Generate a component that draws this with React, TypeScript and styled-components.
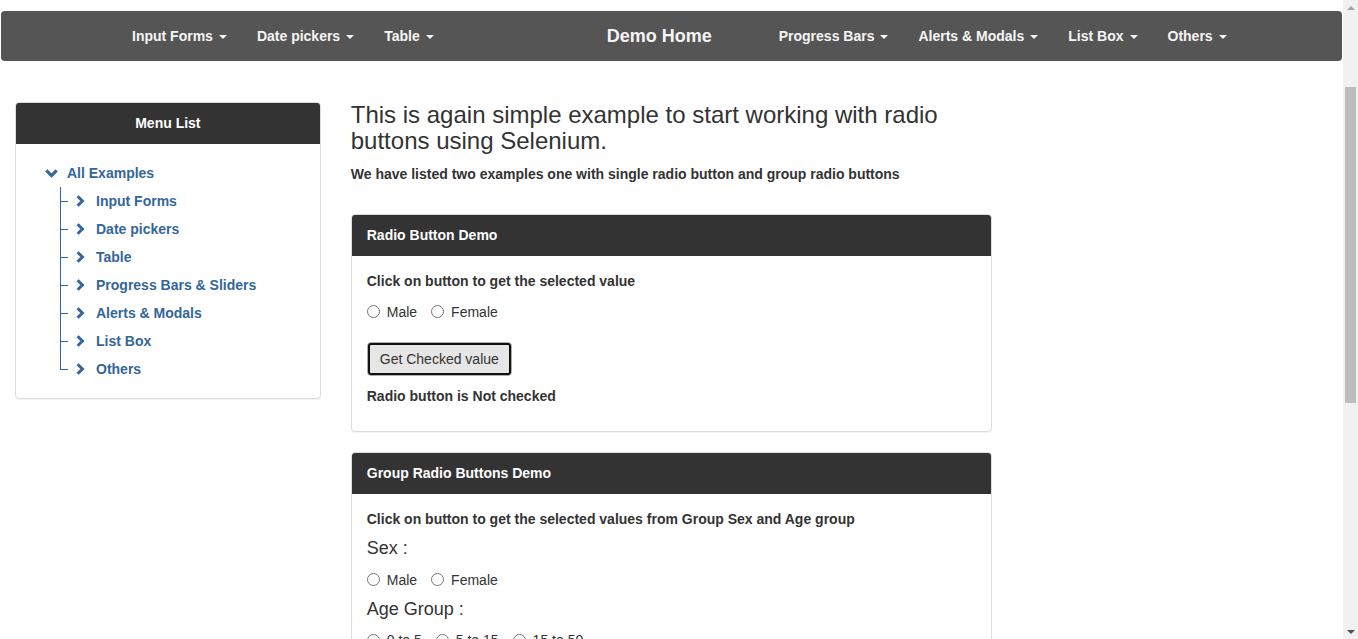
import React from "react";
import styled, { createGlobalStyle } from "styled-components";

const GlobalStyle = createGlobalStyle`
  html, body { margin: 0; padding: 0; }
  body {
    font-family: "Liberation Sans", Helvetica, Arial, sans-serif;
    font-size: 14px;
    line-height: 20px;
    color: #333;
    background: #fff;
  }
  * { box-sizing: border-box; }
`;

const Root = styled.div`
  display: flex;
  align-items: flex-start;
`;

const Page = styled.div`
  flex: 1;
  min-width: 0;
  min-height: 1231px;
  display: flex;
  flex-direction: column;
`;

/* ---------- Scrollbar (browser chrome drawing) ---------- */
const ScrollRail = styled.div`
  position: sticky;
  top: 0;
  flex: 0 0 15px;
  height: 100vh;
  background: #f1f1f1;
  display: flex;
  flex-direction: column;
  align-items: center;
`;

const ScrollArrow = styled.div<{ $dir: "up" | "down" }>`
  flex: 0 0 15px;
  display: flex;
  align-items: center;
  justify-content: center;

  &::before {
    content: "";
    width: 0;
    height: 0;
    border-left: 4px solid transparent;
    border-right: 4px solid transparent;
    ${(p) =>
      p.$dir === "up"
        ? "border-bottom: 4px solid #a3a3a3;"
        : "border-top: 4px solid #505050;"}
  }
`;

const ScrollTrack = styled.div`
  flex: 1;
  width: 100%;
  padding: 0 2px;
`;

const ScrollThumb = styled.div`
  margin-top: 72px;
  height: 316px;
  background: #bdbdbd;
`;

/* ---------- Navbar ---------- */
const NavBar = styled.nav`
  margin: 11px 1px 20px;
  height: 50px;
  background: #555;
  border-radius: 4px;
  display: flex;
  align-items: center;
  padding-left: 116px;
`;

const NavGroup = styled.ul<{ $offset?: number }>`
  list-style: none;
  margin: 0 0 0 ${(p) => p.$offset ?? 0}px;
  padding: 0;
  display: flex;
`;

const NavLink = styled.li`
  padding: 0 15px;
  line-height: 50px;
  font-size: 14px;
  font-weight: bold;
  color: #f5f5f5;
  white-space: nowrap;
  cursor: pointer;
`;

const Caret = styled.span`
  display: inline-block;
  width: 0;
  height: 0;
  margin-left: 6px;
  vertical-align: middle;
  border-top: 4px solid #f5f5f5;
  border-left: 4px solid transparent;
  border-right: 4px solid transparent;
`;

const Brand = styled.div`
  margin-left: 143px;
  padding: 0 15px;
  font-size: 18px;
  font-weight: bold;
  line-height: 50px;
  color: #f5f5f5;
  white-space: nowrap;
`;

/* ---------- Layout ---------- */
const Layout = styled.div`
  display: grid;
  grid-template-columns: 25% 50% 25%;
  flex: 1;
`;

const Col = styled.div`
  padding: 0 15px;
  min-width: 0;
`;

/* ---------- Panels ---------- */
const Panel = styled.div<{ $top?: number }>`
  margin: ${(p) => p.$top ?? 0}px 0 20px;
  border: 1px solid #ddd;
  border-radius: 4px;
  background: #fff;
  box-shadow: 0 1px 1px rgba(0, 0, 0, 0.05);
`;

const PanelHeading = styled.div<{ $center?: boolean }>`
  background: #333;
  color: #fff;
  font-weight: bold;
  padding: 10px 15px;
  line-height: 20px;
  border-bottom: 1px solid #333;
  border-radius: 3px 3px 0 0;
  text-align: ${(p) => (p.$center ? "center" : "left")};
`;

const PanelBody = styled.div`
  padding: 15px;
`;

/* ---------- Tree ---------- */
const TreeRoot = styled.ul`
  list-style: none;
  margin: 0;
  padding: 0 0 0 14px;
`;

const TreeRow = styled.div<{ $gap: number }>`
  display: flex;
  align-items: center;
  height: 28px;
  gap: ${(p) => p.$gap}px;
  color: #336699;
  font-weight: bold;
  cursor: pointer;
`;

const ChildList = styled.ul`
  list-style: none;
  margin: 0 0 0 15px;
  padding: 0;
`;

const ChildItem = styled.li<{ $last?: boolean }>`
  position: relative;
  padding-left: 16px;

  &::before {
    content: "";
    position: absolute;
    left: 0;
    top: 0;
    height: ${(p) => (p.$last ? "14px" : "100%")};
    border-left: 1px solid #336699;
  }
  &::after {
    content: "";
    position: absolute;
    left: 0;
    top: 14px;
    width: 8px;
    border-top: 1px solid #336699;
  }
`;

const ChevronDown = () => (
  <svg width="13" height="9" viewBox="0 0 13 9" aria-hidden="true">
    <polyline points="1.3,1.4 6.5,6.6 11.7,1.4" fill="none" stroke="#336699" strokeWidth="3" />
  </svg>
);

const ChevronRight = () => (
  <svg width="9" height="12" viewBox="0 0 9 12" aria-hidden="true">
    <polyline points="1.6,1.2 6.4,6 1.6,10.8" fill="none" stroke="#336699" strokeWidth="3" />
  </svg>
);

/* ---------- Main content ---------- */
const Heading = styled.h3`
  font-size: 24px;
  font-weight: normal;
  line-height: 1.1;
  margin: 21px 0 9px;
  color: #333;
`;

const BoldText = styled.p`
  margin: 0 0 10px;
  font-weight: bold;
  line-height: 20px;
`;

const SubHeading = styled.h4`
  font-size: 18px;
  font-weight: normal;
  line-height: 1.1;
  margin: 10px 0;
  color: #333;
`;

const RadioRow = styled.div`
  display: flex;
  align-items: center;
  height: 20px;
  margin-top: 11px;
`;

const RadioLabel = styled.label`
  display: inline-flex;
  align-items: center;
  margin-right: 14px;
  cursor: pointer;

  input {
    width: 13px;
    height: 13px;
    margin: 0 7px 0 0;
  }
`;

const ButtonRow = styled.div`
  margin: 20px 0 10px;
`;

const Button = styled.button`
  font-family: "Liberation Sans", Helvetica, Arial, sans-serif;
  font-size: 14px;
  line-height: 20px;
  color: #333;
  background: #e6e6e6;
  border: 1px solid #adadad;
  border-radius: 4px;
  padding: 6px 12px;
  outline: 2px solid #111;
  outline-offset: -3px;
  cursor: pointer;
`;

const PlainButton = styled(Button)`
  outline: none;
  background: #fff;
  border-color: #ccc;
`;

const Footer = styled.footer`
  margin-top: 40px;
  padding: 20px 0;
  text-align: center;
  color: #777;
  border-top: 1px solid #e5e5e5;
`;

const menuItems = [
  "Input Forms",
  "Date pickers",
  "Table",
  "Progress Bars & Sliders",
  "Alerts & Modals",
  "List Box",
  "Others",
];

const Radio = ({ name, label }: { name: string; label: string }) => (
  <RadioLabel>
    <input type="radio" name={name} value={label} />
    {label}
  </RadioLabel>
);

export default function App() {
  return (
    <Root>
      <GlobalStyle />
      <Page>
        <NavBar>
          <NavGroup>
            {["Input Forms", "Date pickers", "Table"].map((t) => (
              <NavLink key={t}>
                {t}
                <Caret />
              </NavLink>
            ))}
          </NavGroup>
          <Brand>Demo Home</Brand>
          <NavGroup $offset={37}>
            {["Progress Bars", "Alerts & Modals", "List Box", "Others"].map((t) => (
              <NavLink key={t}>
                {t}
                <Caret />
              </NavLink>
            ))}
          </NavGroup>
        </NavBar>

        <Layout>
          <Col>
            <Panel $top={21}>
              <PanelHeading $center>Menu List</PanelHeading>
              <PanelBody>
                <TreeRoot>
                  <li>
                    <TreeRow $gap={9}>
                      <ChevronDown />
                      All Examples
                    </TreeRow>
                    <ChildList>
                      {menuItems.map((m, i) => (
                        <ChildItem key={m} $last={i === menuItems.length - 1}>
                          <TreeRow $gap={11}>
                            <ChevronRight />
                            {m}
                          </TreeRow>
                        </ChildItem>
                      ))}
                    </ChildList>
                  </li>
                </TreeRoot>
              </PanelBody>
            </Panel>
          </Col>

          <Col>
            <Heading>
              This is again simple example to start working with radio buttons using Selenium.
            </Heading>
            <BoldText>We have listed two examples one with single radio button and group radio buttons</BoldText>

            <Panel $top={30}>
              <PanelHeading>Radio Button Demo</PanelHeading>
              <PanelBody>
                <BoldText>Click on button to get the selected value</BoldText>
                <RadioRow>
                  <Radio name="optradio" label="Male" />
                  <Radio name="optradio" label="Female" />
                </RadioRow>
                <ButtonRow>
                  <Button type="button">Get Checked value</Button>
                </ButtonRow>
                <BoldText>Radio button is Not checked</BoldText>
              </PanelBody>
            </Panel>

            <Panel>
              <PanelHeading>Group Radio Buttons Demo</PanelHeading>
              <PanelBody>
                <BoldText>Click on button to get the selected values from Group Sex and Age group</BoldText>
                <SubHeading>Sex :</SubHeading>
                <RadioRow>
                  <Radio name="gender" label="Male" />
                  <Radio name="gender" label="Female" />
                </RadioRow>
                <SubHeading>Age Group :</SubHeading>
                <RadioRow>
                  <Radio name="ageGroup" label="0 to 5" />
                  <Radio name="ageGroup" label="5 to 15" />
                  <Radio name="ageGroup" label="15 to 50" />
                </RadioRow>
                <ButtonRow>
                  <PlainButton type="button">Get values</PlainButton>
                </ButtonRow>
                <BoldText>&nbsp;</BoldText>
              </PanelBody>
            </Panel>
          </Col>

          <Col />
        </Layout>

        <Footer>© Selenium Easy</Footer>
      </Page>
      <ScrollRail aria-hidden="true">
        <ScrollArrow $dir="up" />
        <ScrollTrack>
          <ScrollThumb />
        </ScrollTrack>
        <ScrollArrow $dir="down" />
      </ScrollRail>
    </Root>
  );
}
